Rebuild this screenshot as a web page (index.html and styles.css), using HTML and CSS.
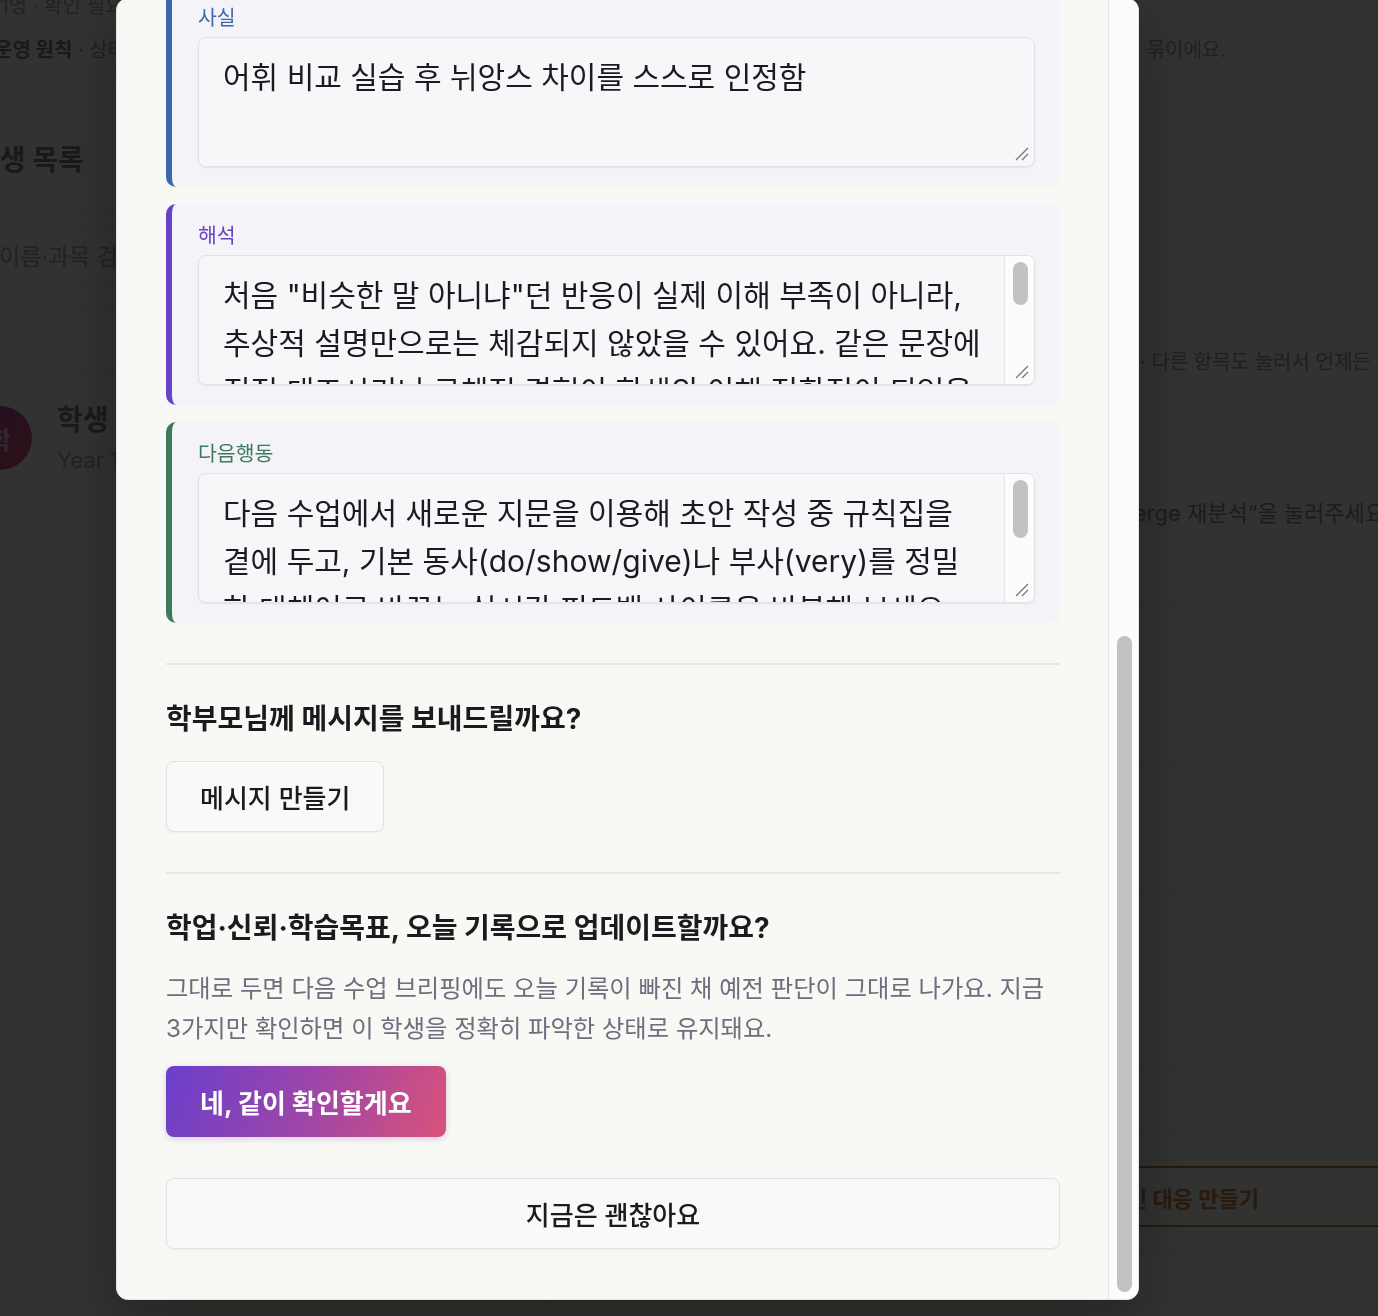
FILE: index.html
```html
<!DOCTYPE html>
<html lang="ko">
<head>
<meta charset="utf-8">
<title>수업 기록 정리</title>
<link rel="stylesheet" href="styles.css">
</head>
<body>
<div class="page">
  <div class="page-inner">
    <header class="topbar">
      <p class="crumb">41명 · 확인 필요</p>
      <p class="policy"><span><strong>운영 원칙</strong> · 상태 변화는 선생님 확인 후에만 반영돼요</span><span>같은 주제의 기록은 하나로 묶이에요.</span></p>
    </header>
    <div class="content">
      <aside class="sidebar">
        <div class="side-head"><h2 class="side-title">학생 목록</h2></div>
        <div class="side-search"><input class="search" type="text" placeholder="이름·과목 검색"></div>
        <div class="side-filter"><span class="chip">전체</span><span class="chip">확인 필요</span><span class="chip">오늘 수업</span></div>
        <div class="student">
          <span class="avatar">학</span>
          <div class="student-info">
            <p class="student-name">학생 A</p>
            <p class="student-meta">Year 10 · 영어</p>
          </div>
        </div>
      </aside>
      <main class="main">
        <p class="hint">추천 순서대로 오늘 꼭 확인할 기록부터 먼저 보여드리고 있어요 · 다른 항목도 눌러서 언제든 바꿀 수 있어요.</p>
        <p class="lead">만약 같은 학생의 두 기록이 서로 겹치거나 어긋나 보이면 “Merge 재분석”을 눌러주세요.</p>
        <div class="rows">
          <div class="row row-a"></div>
          <div class="row row-b"></div>
          <div class="row row-c"></div>
          <div class="row row-d"></div>
        </div>
        <button class="make" type="button">오늘 기록으로 개인 대응 만들기</button>
        <div class="row-end"></div>
      </main>
    </div>
  </div>
</div>

<div class="overlay">
  <div class="modal" role="dialog" aria-label="수업 기록 정리">
    <div class="modal-body">
      <header class="modal-head">
        <p class="eyebrow">수업 기록 정리</p>
        <h2 class="modal-title">오늘 수업, 이렇게 기록해 둘까요?</h2>
        <p class="modal-desc">수업 중 남긴 메모를 사실·해석·다음행동으로 나눠 정리했어요. 필요한 부분은 바로 고쳐 주세요.</p>
      </header>

      <div class="summary">
        <p class="summary-text">오늘은 어휘 뉘앙스 비교가 중심이었어요. 처음엔 헷갈려했지만 실습 후 스스로 차이를 설명할 수 있었어요.</p>
        <div class="tags"><span class="tag">어휘</span><span class="tag">뉘앙스</span><span class="tag">자기 교정</span></div>
      </div>

      <section class="scene">
        <h3 class="scene-title">장면 1 · 도입 활동</h3>
        <div class="cards">
          <div class="card card-fact">
            <label class="card-label" for="a1">사실</label>
            <div class="field-box">
              <textarea class="field" id="a1">수업 초반 단어 퀴즈에서 10문항 중 8문항을 맞힘</textarea>
              <svg class="grip" viewBox="0 0 14 14" aria-hidden="true"><path d="M13 1 1 13M13 7 7 13"/></svg>
            </div>
          </div>
          <div class="card card-read">
            <label class="card-label" for="a2">해석</label>
            <div class="field-box">
              <textarea class="field" id="a2">기초 어휘는 안정적으로 익히고 있어요.</textarea>
              <svg class="grip" viewBox="0 0 14 14" aria-hidden="true"><path d="M13 1 1 13M13 7 7 13"/></svg>
            </div>
          </div>
          <div class="card card-next">
            <label class="card-label" for="a3">다음행동</label>
            <div class="field-box">
              <textarea class="field" id="a3">다음 주에는 퀴즈 난이도를 한 단계 올려 보세요.</textarea>
              <svg class="grip" viewBox="0 0 14 14" aria-hidden="true"><path d="M13 1 1 13M13 7 7 13"/></svg>
            </div>
          </div>
        </div>
      </section>

      <section class="scene">
        <h3 class="scene-title">장면 2 · 어휘 비교 실습</h3>
        <div class="cards">
          <div class="card card-fact">
            <label class="card-label" for="b1">사실</label>
            <div class="field-box">
              <textarea class="field" id="b1">어휘 비교 실습 후 뉘앙스 차이를 스스로 인정함</textarea>
              <svg class="grip" viewBox="0 0 14 14" aria-hidden="true"><path d="M13 1 1 13M13 7 7 13"/></svg>
            </div>
          </div>
          <div class="card card-read">
            <label class="card-label" for="b2">해석</label>
            <div class="field-box">
              <textarea class="field" id="b2">처음 "비슷한 말 아니냐"던 반응이 실제 이해 부족이 아니라, 추상적 설명만으로는 체감되지 않았을 수 있어요. 같은 문장에 직접 대조시키니 구체적 경험이 학생의 이해 전환점이 되었을 수 있어요. 앞으로도 비교 예문을 먼저 보여주는 방식이 효과적일 거예요.</textarea>
              <span class="field-rail"><span class="field-thumb" style="height: 43px"></span></span>
              <svg class="grip" viewBox="0 0 14 14" aria-hidden="true"><path d="M13 1 1 13M13 7 7 13"/></svg>
            </div>
          </div>
          <div class="card card-next">
            <label class="card-label" for="b3">다음행동</label>
            <div class="field-box">
              <textarea class="field field-loose" id="b3">다음 수업에서 새로운 지문을 이용해 초안 작성 중 규칙집을 곁에 두고, 기본 동사(do/show/give)나 부사(very)를 정밀한 대체어로 바꾸는 실시간 피드백 사이클을 반복해 보세요.</textarea>
              <span class="field-rail"><span class="field-thumb" style="height: 58px"></span></span>
              <svg class="grip" viewBox="0 0 14 14" aria-hidden="true"><path d="M13 1 1 13M13 7 7 13"/></svg>
            </div>
          </div>
        </div>
      </section>

      <section class="ask">
        <h3 class="ask-title">학부모님께 메시지를 보내드릴까요?</h3>
        <div class="ask-actions">
          <button class="btn btn-outline" type="button">메시지 만들기</button>
        </div>
      </section>

      <section class="ask">
        <h3 class="ask-title">학업·신뢰·학습목표, 오늘 기록으로 업데이트할까요?</h3>
        <p class="ask-desc">그대로 두면 다음 수업 브리핑에도 오늘 기록이 빠진 채 예전 판단이 그대로 나가요. 지금 3가지만 확인하면 이 학생을 정확히 파악한 상태로 유지돼요.</p>
        <div class="ask-actions">
          <button class="btn btn-primary" type="button">네, 같이 확인할게요</button>
          <button class="btn btn-outline btn-block" type="button">지금은 괜찮아요</button>
        </div>
      </section>
    </div>
    <div class="modal-rail" aria-hidden="true"><span class="modal-thumb"></span></div>
  </div>
</div>
<script src="script.js"></script>
</body>
</html>
```

FILE: styles.css
```css
* { box-sizing: border-box; }

html, body {
  margin: 0;
  height: 100%;
}

body {
  font-family: Inter, "Noto Sans CJK KR", sans-serif;
  background: #fafaf5;
  color: #8a8a8a;
  overflow: hidden;
}

p, h2, h3 { margin: 0; }

/* ---------- background page ---------- */
.page {
  width: 100%;
  height: 100%;
  overflow: hidden;
}

.page-inner {
  width: 1688px;
  margin-left: -40px;
}

.topbar {
  padding-left: 34px;
}

.crumb {
  margin: -8px 0 0 -6px;
  font-size: 20px;
  line-height: 28px;
  color: #a6a6a6;
  white-space: nowrap;
}

.policy {
  display: flex;
  justify-content: space-between;
  width: 1418px;
  padding-right: 186px;
  margin-top: 17px;
  font-size: 20px;
  line-height: 26px;
  color: #a4a4a4;
  white-space: nowrap;
}

.policy strong {
  color: #7e7e7e;
  font-weight: 700;
}

.content {
  display: grid;
  grid-template-columns: 588px 1100px;
  min-height: calc(100vh - 63px);
}

.sidebar {
  border-right: 1px solid #e2e2de;
}

.side-head {
  padding: 79px 24px 30px 14px;
  border-bottom: 1px solid #e4e4e0;
}

.side-title {
  font-size: 28px;
  line-height: 36px;
  font-weight: 700;
  color: #7e7e7e;
}

.side-search {
  padding: 17px 24px 18px 14px;
  border-bottom: 1px solid #e4e4e0;
}

.search {
  display: block;
  width: 100%;
  height: 61px;
  padding: 0 24px;
  font-family: inherit;
  font-size: 23px;
  background: #fafaf5;
  border: 1px solid #e2e2de;
  border-radius: 8px;
}

.search::placeholder { color: #a9a9a9; }

.side-filter {
  display: flex;
  gap: 10px;
  align-items: center;
  height: 64px;
  padding: 0 24px 0 170px;
  border-bottom: 1px solid #e4e4e0;
}

.chip {
  font-size: 16px;
  color: #a6a6a6;
}

.student {
  display: flex;
  align-items: center;
  gap: 25px;
  padding: 32px 24px 0 8px;
}

.avatar {
  flex: none;
  display: flex;
  align-items: center;
  justify-content: center;
  width: 64px;
  height: 64px;
  border-radius: 50%;
  background: linear-gradient(135deg, #b04aa8, #e05478);
  color: #f0c8dc;
  font-size: 24px;
  font-weight: 700;
}

.student-name {
  font-size: 28px;
  line-height: 36px;
  font-weight: 700;
  color: #7e7e7e;
}

.student-meta {
  margin-top: 8px;
  font-size: 22px;
  line-height: 28px;
  color: #a9a9a9;
}

.main {
  padding: 286px 0 0 35px;
}

.hint {
  padding-left: 28px;
  font-size: 20px;
  line-height: 26px;
  color: #9a9a9a;
  white-space: nowrap;
}

.lead {
  margin-top: 122px;
  font-size: 22px;
  line-height: 32px;
  color: #8c8c8c;
  white-space: nowrap;
}

.rows {
  margin: 74px 0 0 -35px;
  border-bottom: 1px solid #e6e6e2;
}

.row {
  border-top: 1px solid #e6e6e2;
}

.row-a { height: 160px; }
.row-b { height: 130px; }
.row-c { height: 178px; }
.row-d { height: 61px; }

.make {
  display: block;
  width: calc(100% + 35px);
  height: 61px;
  margin: 33px 0 0 -35px;
  padding-left: 44px;
  font-family: inherit;
  font-size: 22px;
  font-weight: 700;
  color: #c8823e;
  background: transparent;
  border: 2px solid #b9793f;
  border-radius: 10px;
}

.row-end {
  margin: 26px 0 0 -35px;
  border-top: 1px solid #e6e6e2;
}

/* ---------- modal ---------- */
.overlay {
  position: fixed;
  inset: 0;
  display: flex;
  align-items: flex-end;
  padding: 0 0 16px 116px;
  background: rgba(0, 0, 0, 0.8);
}

.modal {
  flex: none;
  display: flex;
  width: 1023px;
  height: 1302px;
  background: #f8f8f5;
  border: 1px solid #e3e3e9;
  border-radius: 12px;
  overflow: hidden;
  box-shadow: 0 20px 60px rgba(0, 0, 0, 0.3);
}

.modal-body {
  flex: 1;
  min-width: 0;
  overflow-y: scroll;
  scrollbar-width: none;
  padding: 40px 48px 10px 49px;
  color: #1b1b1f;
}

.modal-rail {
  flex: none;
  display: flex;
  flex-direction: column;
  justify-content: flex-end;
  width: 30px;
  padding: 0 6px 7px 8px;
  background: #fcfcfc;
  border-left: 1px solid #e4e4e9;
}

.modal-thumb {
  display: block;
  height: 656px;
  background: #c2c2c2;
  border-radius: 8px;
}

.modal-head { margin-bottom: 32px; }

.eyebrow {
  font-size: 18px;
  line-height: 26px;
  color: #6a42c8;
  font-weight: 600;
}

.modal-title {
  margin-top: 6px;
  font-size: 30px;
  line-height: 42px;
  font-weight: 700;
}

.modal-desc {
  margin-top: 10px;
  font-size: 24px;
  line-height: 40px;
  color: #6e6e7f;
}

.summary {
  margin-bottom: 36px;
  padding: 22px 26px;
  background: #f4f4f8;
  border: 1px solid #e6e6ee;
  border-radius: 10px;
}

.summary-text {
  font-size: 24px;
  line-height: 40px;
  color: #3a3a44;
}

.tags {
  display: flex;
  gap: 10px;
  margin-top: 16px;
}

.tag {
  display: inline-flex;
  align-items: center;
  height: 40px;
  padding: 0 16px;
  font-size: 18px;
  color: #5b4a9e;
  background: #ece8f8;
  border-radius: 20px;
}

.scene + .scene { margin-top: 36px; }

.scene-title {
  margin-bottom: 14px;
  font-size: 20px;
  line-height: 30px;
  font-weight: 700;
  color: #4a4a55;
}

.cards {
  display: flex;
  flex-direction: column;
  gap: 17px;
}

.card {
  display: flex;
  flex-direction: column;
  gap: 7px;
  padding: 20px 25px 20px 26px;
  background: #f4f4f8;
  border-left: 6px solid;
  border-radius: 10px;
}

.card-label {
  font-size: 20.5px;
  line-height: 24px;
}

.card-fact { border-color: #3c69a9; }
.card-fact .card-label { color: #3c69a9; }
.card-read { border-color: #6a41c9; }
.card-read .card-label { color: #6a41c9; }
.card-next { border-color: #3d7a5b; }
.card-next .card-label { color: #3d7a5b; }

.field-box {
  position: relative;
  display: flex;
  height: 130px;
  background: #f7f7fa;
  border: 1px solid #e1e1e8;
  border-radius: 8px;
  box-shadow: 0 1px 2px rgba(20, 20, 40, 0.07);
  overflow: hidden;
}

.field {
  flex: 1;
  min-width: 0;
  height: 100%;
  padding: 15px 14px 15px 24px;
  font-family: inherit;
  font-size: 30px;
  line-height: 48px;
  color: #1b1b1f;
  background: transparent;
  border: 0;
  word-break: keep-all;
  resize: none;
  outline: none;
  overflow-y: auto;
  scrollbar-width: none;
}

.field-loose {
  padding-right: 28px;
  word-break: normal;
}

.field-rail {
  flex: none;
  width: 30px;
  padding: 6px 6px 0 8px;
  background: #fcfcfd;
  border-left: 1px solid #e6e6eb;
}

.field-thumb {
  display: block;
  background: #c2c2c2;
  border-radius: 8px;
}

.grip {
  position: absolute;
  right: 5px;
  bottom: 5px;
  width: 14px;
  height: 14px;
  fill: none;
  stroke: #77777c;
  stroke-width: 1.3;
}

.ask {
  margin-top: 40px;
  padding: 35px 0 40px;
  border-top: 2px solid #e6e6ec;
}

.ask + .ask { margin-top: 0; }

.ask-title {
  font-size: 28px;
  line-height: 38px;
  font-weight: 700;
  color: #1b1b1f;
}

.ask-desc {
  margin-top: 21px;
  font-size: 24.3px;
  line-height: 40px;
  color: #6e6e7f;
  word-break: keep-all;
}

.ask-actions {
  display: flex;
  flex-direction: column;
  align-items: flex-start;
  gap: 41px;
  margin-top: 23px;
}

.ask-desc + .ask-actions { margin-top: 18px; }

.btn {
  display: inline-flex;
  align-items: center;
  justify-content: center;
  height: 71px;
  padding: 0 33px;
  font-family: inherit;
  font-size: 26px;
  border-radius: 8px;
  cursor: pointer;
}

.btn-outline {
  color: #1b1b1f;
  font-weight: 500;
  background: #f9f9f7;
  border: 1.5px solid #e1e1ea;
  box-shadow: 0 1px 2px rgba(20, 20, 40, 0.05);
}

.btn-primary {
  padding: 0 34px;
  color: #ffffff;
  font-weight: 700;
  background: linear-gradient(110deg, #6a3fcb 0%, #9c45a9 50%, #d9527a 100%);
  border: 0;
  box-shadow: 0 2px 6px rgba(110, 60, 160, 0.22);
}

.btn-block { align-self: stretch; }
```

FILE: script.js
```js
document.querySelectorAll('.modal-body').forEach(function (el) {
  el.scrollTop = el.scrollHeight;
});
```
